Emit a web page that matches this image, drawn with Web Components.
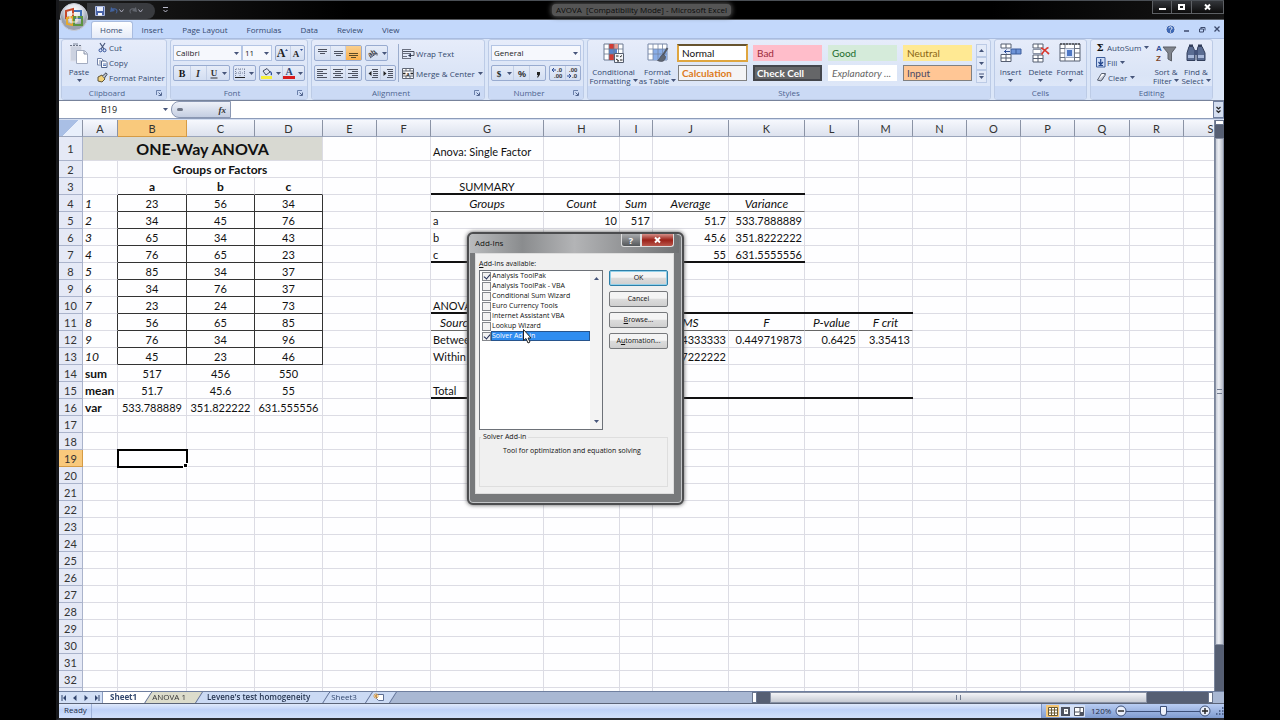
<!DOCTYPE html>
<html lang="en">
<head>
<meta charset="utf-8">
<title>AVOVA [Compatibility Mode] - Microsoft Excel</title>
<style>
   body {
      margin: 0;
      padding: 0 56px 0 56px;
      height: 100vh;
      box-sizing: border-box;
      background: #000;
      overflow: hidden;
      font-family: "Open Sans", sans-serif;
      font-size: 8px;
      line-height: 10px;
      color: #2b3f6b;
   }
</style>
</head>
<body>
<excel-window>
   <title-bar slot="title"></title-bar>
   <ribbon-tabs slot="tabs"></ribbon-tabs>
   <excel-ribbon slot="ribbon"></excel-ribbon>
   <formula-bar slot="formula"></formula-bar>
   <work-sheet slot="sheet"></work-sheet>
   <scroll-column slot="scroll"></scroll-column>
   <sheet-tabs slot="sheets"></sheet-tabs>
   <status-bar slot="status">Ready</status-bar>
</excel-window>
<addins-dialog></addins-dialog>

<script>
// Icon drawings: [width, height, svg content]
const ICONS = {
   arrow: [5, 3, `<path d="M0 0h5L2.5 3z" fill="#46557a"/>`],
   arrowup: [5, 3, `<path d="M0 3h5L2.5 0z" fill="#46557a"/>`],
   more: [7, 7, `<path d="M1 1h5" stroke="#46557a"/><path d="M1 3h5l-2.500 3z" fill="#46557a"/>`],
   launcher: [6, 6, `<path d="M.5 5V.5H5" fill="none" stroke="#6b80ab"/><path d="M2.500 2.500L5 5M5.500 2.500v3h-3" fill="none" stroke="#53668f"/>`],
   save: [10, 10, `<path d="M.5.5h9v9h-9z" fill="#4a64a8" stroke="#a9b7dd"/><path d="M2 1h6v4H2z" fill="#e9eefb"/><path d="M3 7h4v2.500H3z" fill="#fff"/>`],
   undo: [10, 10, `<path d="M2 1L1 6l5-1-1.500-1.200C7 3 8.500 5 6.500 8 10 6 9 1 3.600 2.400z" fill="#42639f"/>`],
   redo: [10, 10, `<path d="M8 1l1 5-5-1 1.500-1.200C3 3 1.500 5 3.500 8 0 6 1 1 6.400 2.400z" fill="#62666e"/>`],
   qarrow: [5, 4, `<path d="M.5.5L2.500 3 4.500.5" fill="none" stroke="#aab"/>`],
   qmore: [5, 6, `<path d="M0 .5h5M.5 3l2 2 2-2" fill="none" stroke="#bbc"/>`],
   office: [30, 30, `
      <defs><radialGradient id="g" cx=".5" cy=".3"><stop offset="0" stop-color="#fff"/><stop offset=".6" stop-color="#dfe2ea"/><stop offset="1" stop-color="#9aa0ad"/></radialGradient></defs>
      <circle cx="15" cy="15" r="13.500" fill="url(#g)" stroke="#c8ccd6"/>
      <path d="M7 9l7-2v8l-7 1z" fill="none" stroke="#c5482a" stroke-width="2"/>
      <path d="M15 9h7v7h-6" fill="none" stroke="#4372b8" stroke-width="2"/>
      <path d="M8 16l6-1v8l-6-1z" fill="none" stroke="#e6a92c" stroke-width="2"/>
      <path d="M15 15h8v8h-8z" fill="none" stroke="#5c9440" stroke-width="2"/>
      <path d="M11 12h7v8h-7z" fill="none" stroke="#f8f0d8"/>`],
   help: [11, 11, `<circle cx="5.500" cy="5.500" r="4.500" fill="#3e68b5" stroke="#dfe8fa"/><path d="M4 4.300c0-2 3-2 3 0 0 1.200-1.500 1-1.500 2.200M5.500 7.500v1" fill="none" stroke="#fff"/>`],
   min: [8, 8, `<path d="M1 6h5" stroke="#3c4a6c" stroke-width="1.500"/>`],
   restore: [8, 8, `<path d="M3 2.500h4v3M1.500 4h4v3h-4zM3 2v2" fill="none" stroke="#3c4a6c"/>`],
   close: [8, 8, `<path d="M1.500 1.500l5 5M6.500 1.500l-5 5" stroke="#3c4a6c" stroke-width="1.300"/>`],
   wmin: [9, 8, `<path d="M1 5h7v2H1z" fill="#fff"/>`],
   wmax: [9, 8, `<path d="M2 2h5v4H2z" fill="none" stroke="#fff" stroke-width="2"/>`],
   wclose: [9, 8, `<path d="M2 1.500l5 5M7 1.500l-5 5" stroke="#fff" stroke-width="2"/>`],
   paste: [20, 22, `<path d="M1.500 3h11v15h-11z" fill="#ccd2e0" stroke="#dfe2ec"/><path d="M1 2.500h12" stroke="#6d7688" stroke-dasharray="2 1"/><path d="M4 1h5" stroke="#7b8496"/><path d="M7.500 7.500h8l3 3v10h-11z" fill="#fff" stroke="#a3acc0"/><path d="M15 8v3h3" fill="#dfe4ef" stroke="#8b95ab"/>`],
   cut: [11, 11, `<path d="M3 1l4 6M8 1L4 7" stroke="#46557a" stroke-width="1.200"/><circle cx="3.500" cy="8.300" r="1.500" fill="none" stroke="#2f4f97"/><circle cx="7.500" cy="8.300" r="1.500" fill="none" stroke="#2f4f97"/>`],
   copy: [11, 11, `<path d="M.5 1.500h4l1.500 1.500v5H.5z" fill="#fff" stroke="#7383a8"/><path d="M2 4h2M2 6h2" stroke="#7383a8"/><path d="M4.500 4h4L10 5.500v5H4.500z" fill="#fff" stroke="#53668f"/><path d="M6 7h3M6 8.500h3" stroke="#5c7bb8"/>`],
   painter: [11, 11, `<path d="M1 5l4-2 3 4-3 3-4-1z" fill="#f2d27a" stroke="#5d5336"/><path d="M5.500 4L9 .8l1.200 1.400L7.500 6" fill="#b9bfca" stroke="#444c5c"/>`],
   bold: [10, 11, `<text x="5" y="9" font-family="Liberation Serif" font-size="10" font-weight="700" text-anchor="middle" fill="#151515">B</text>`],
   italic: [10, 11, `<text x="5" y="9" font-family="Liberation Serif" font-size="10" font-style="italic" font-weight="700" text-anchor="middle" fill="#333">I</text>`],
   underline: [10, 11, `<text x="5" y="8" font-family="Liberation Serif" font-size="9" font-weight="700" text-anchor="middle" fill="#333">U</text><path d="M1.500 10h7" stroke="#333"/>`],
   grow: [13, 12, `<text x="5" y="10" font-family="Liberation Serif" font-size="12" font-weight="700" text-anchor="middle" fill="#222">A</text><path d="M9 4l1.500-2L12 4z" fill="#2f4f97"/>`],
   shrink: [13, 12, `<text x="5" y="10" font-family="Liberation Serif" font-size="9" font-weight="700" text-anchor="middle" fill="#222">A</text><path d="M9 2l1.500 2L12 2z" fill="#2f4f97"/>`],
   borders: [11, 11, `<path d="M.5 1v8M5 1v8M9.500 1v8M1 1h9M1 5h9" stroke="#7c87a0" stroke-dasharray="1 1" fill="none"/><path d="M0 9.500h10" stroke="#222"/>`],
   fill: [12, 12, `<path d="M2 4l4-2.500L9 5 5 8z" fill="#dfe5f2" stroke="#414b63"/><path d="M9 4.500c2 1 1.500 3 1 3.500" fill="none" stroke="#2f4f97" stroke-width="1.300"/><path d="M0 9h11v3H0z" fill="#f6f03c"/>`],
   color: [12, 12, `<text x="6" y="8" font-family="Liberation Serif" font-size="10" font-weight="700" text-anchor="middle" fill="#2b3f6b">A</text><path d="M0 9h12v3H0z" fill="#d91c1c"/>`],
   top: [11, 11, `<path d="M1 1.500h9M1 3.500h9M3 5.500h5" stroke="#4d5260"/>`],
   middle: [11, 11, `<path d="M1 3.500h9M1 5.500h9M3 7.500h5" stroke="#4d5260"/>`],
   bottom: [11, 11, `<path d="M1 5.500h9M1 7.500h9M3 9.500h5" stroke="#5c4a26"/>`],
   left: [11, 11, `<path d="M0 1.500h10M0 3.500h6M0 5.500h10M0 7.500h6M0 9.500h10" stroke="#4d5260"/>`],
   center: [11, 11, `<path d="M0 1.500h10M2 3.500h6M0 5.500h10M2 7.500h6M0 9.500h10" stroke="#4d5260"/>`],
   right: [11, 11, `<path d="M0 1.500h10M4 3.500h6M0 5.500h10M4 7.500h6M0 9.500h10" stroke="#4d5260"/>`],
   orient: [12, 11, `<text x="1" y="8" font-size="7" font-weight="700" fill="#333" transform="rotate(-35 4 6)">ab</text><path d="M3 10l7-5M10 5L7.500 5.500M10 5v2.500" stroke="#4d5260" fill="none"/>`],
   outdent: [12, 11, `<path d="M5 1.500h6M6 3.500h5M6 5.500h5M6 7.500h5M5 9.500h6" stroke="#4d5260"/><path d="M4.500 3L1.500 5.500l3 2.500z" fill="#222"/>`],
   indent: [12, 11, `<path d="M5 1.500h6M6 3.500h5M6 5.500h5M6 7.500h5M5 9.500h6" stroke="#4d5260"/><path d="M1.500 3l3 2.500-3 2.500z" fill="#222"/>`],
   wrap: [13, 12, `<path d="M.5 1v10M1 1.500h8M1 5.500h8M1 8.500h4M1 10.500h8" stroke="#6a7080"/><path d="M1 3.500h11v4H8" fill="none" stroke="#4d5260"/><path d="M9 5.500L6 7.500l3 2z" fill="#2b3550"/>`],
   merge: [13, 12, `<path d="M.5.5h11v10H.5zM4 .5V3M8 .5V3M4 8v2.500M8 8v2.500M.5 3h11M.5 8h11" fill="#fff" stroke="#5e6675"/><text x="6" y="7.500" font-size="5" font-weight="700" text-anchor="middle" fill="#222">a</text><path d="M1 5.500h2.500M8.500 5.500H11" stroke="#222" stroke-width="1.400"/>`],
   dollar: [10, 11, `<text x="5" y="9" font-size="9" font-family="Liberation Serif" font-weight="700" text-anchor="middle" fill="#222">$</text>`],
   percent: [10, 11, `<text x="5" y="9" font-size="9" font-weight="600" text-anchor="middle" fill="#222">%</text>`],
   comma: [10, 11, `<path d="M4 4h3v2.500L5 9.500H4L5 7H4z" fill="#222"/>`],
   decinc: [13, 12, `<text x="6" y="5" font-size="6" font-weight="700" fill="#333">.0</text><text x="3" y="11" font-size="6" font-weight="700" fill="#333">.00</text><path d="M1 3h4M3 1L1 3l2 2" fill="none" stroke="#2f4f97"/>`],
   decdec: [13, 12, `<text x="3" y="5" font-size="6" font-weight="700" fill="#333">.00</text><text x="6" y="11" font-size="6" font-weight="700" fill="#333">.0</text><path d="M1 9h4M3 7l2 2-2 2" fill="none" stroke="#2f4f97"/>`],
   cond: [22, 20, `<path d="M1 1h19v16H1z" fill="#fff" stroke="#6b7890"/><path d="M6 1h5v5H6zM6 11h5v6H6z" fill="#d23c34"/><path d="M6 6h8v5H6z" fill="#5b84cc"/><path d="M11 1h4v5h-4z" fill="#e89b91"/><path d="M6 1v16M11 1v16M15.500 1v16M1 6h19M1 11h19" stroke="#6b7890" stroke-width=".8"/><path d="M11.500 10.500h9v9h-9z" fill="#f5f6f9" stroke="#555e70"/><path d="M13 13h2.500M17 14l2-1.500M13 16l2.500 1.500M17 17h2.500M14 18h2" stroke="#222"/>`],
   table: [22, 20, `<path d="M1 1h19v16H1z" fill="#fff" stroke="#7585a5"/><path d="M6 6h14v11H6z" fill="#8aaee8"/><path d="M6 1v16M11 1v16M15.500 1v16M1 6h19M1 11h19" stroke="#7585a5" stroke-width=".8"/><path d="M20.500 5L16 12" stroke="#555b66" stroke-width="2"/><path d="M16.500 11.500c-3 0-3 4-6 6 4 2 8 1 8-4z" fill="#5f6673" stroke="#3f4552" stroke-width=".6"/>`],
   insert: [22, 20, `<path d="M1 1h10v4H1zM6 1v4M1 11.500h10v7H1zM6 11.500v7M1 15h10" fill="#fff" stroke="#555e70"/><path d="M11 6h10v5H11z" fill="#6d93d6" stroke="#3f5f9c"/><path d="M16 6v5" stroke="#3f5f9c"/><path d="M10 8.500H4M6.500 6.500l-2 2 2 2" fill="none" stroke="#2f4f97"/>`],
   delete: [22, 20, `<path d="M3 1h10v4H3zM8 1v4M3 12h10v7H3zM8 12v7M3 15.500h10" fill="#fff" stroke="#555e70"/><path d="M3 6.500h8v4H3z" fill="#fff" stroke="#8a93a6"/><path d="M11 5c3 1 5 3 8 6M18.500 4.500c-3 1-5 4-7 7" fill="none" stroke="#d8392f" stroke-width="1.800"/>`],
   format: [22, 20, `<path d="M1 1h20v17H1z" fill="#fff" stroke="#555e70"/><path d="M1 5.500h20M1 10h20M1 14.500h20M6 1v17M15.500 1v17" stroke="#6b7382"/><path d="M6 5.500h9v9H6z" fill="#d8e4fa"/><path d="M8 7h5v6H8z" fill="#4f78c4"/><path d="M1 1h20" stroke="#222" stroke-dasharray="2 1"/>`],
   sum: [10, 11, `<text x="4" y="9" font-size="10" font-family="DejaVu Serif" font-weight="700" text-anchor="middle" fill="#111">Σ</text>`],
   filldown: [10, 11, `<path d="M.5.5h8.500v9.500H.5z" fill="#cddcf7" stroke="#3f5f9c"/><path d="M4.700 2v5M2.500 5l2.200 2.500L7 5M2.500 8.500H7" fill="none" stroke="#24468c" stroke-width="1.200"/>`],
   eraser: [11, 11, `<path d="M5.500 1.500h4L6 8H1.500z" fill="#fff" stroke="#555e70"/><path d="M1.500 8L5 9l4-5.500V2" fill="#c5cbd8" stroke="#555e70"/>`],
   sort: [22, 20, `<text x="1" y="8" font-family="Liberation Sans" font-size="8" font-weight="700" fill="#2f4f97">A</text><text x="1" y="18" font-family="Liberation Sans" font-size="8" font-weight="700" fill="#7a4428">Z</text><path d="M8 4h13l-4.500 6v8l-3.500-2v-6z" fill="#80848c" stroke="#5c6068"/>`],
   find: [22, 20, `<path d="M4 3.500h4l2 5v9H2V10zM13 3.500h4l3 6.500v7.500h-8v-9z" fill="#5a6c92" stroke="#333f5c"/><path d="M9 7h4v5H9z" fill="#44537a"/><path d="M4 1.500h4v2H4zM13 1.500h4v2h-4z" fill="#333f5c"/><path d="M3 12h6v3H3zM13 12h6v3h-6z" fill="#a8b8da"/>`],
   chevrons: [7, 8, `<path d="M1.500 1l2 2 2-2M1.500 4.500l2 2 2-2" fill="none" stroke="#222" stroke-width="1.200"/>`],
   newsheet: [13, 9, `<path d="M3.500 1.500h7v6h-5l-2-2z" fill="#fff" stroke="#5d6e94"/><path d="M3 0v6M0 3h6M1 1l4 4M5 1L1 5" stroke="#dd9a38" stroke-width=".8"/>`],
   first: [6, 6, `<path d="M1 0v6" stroke="#33466f"/><path d="M5 0v6L2 3z" fill="#33466f"/>`],
   prev: [6, 6, `<path d="M4.500 0v6L1 3z" fill="#33466f"/>`],
   next: [6, 6, `<path d="M1.500 0v6L5 3z" fill="#33466f"/>`],
   last: [6, 6, `<path d="M5 0v6" stroke="#33466f"/><path d="M1 0v6l3-3z" fill="#33466f"/>`],
   vnormal: [10, 9, `<path d="M.5.5h9v8h-9zM.5 3h9M.5 6h9M3.500.5v8M6.500.5v8" fill="#fff" stroke="#6a5a33"/>`],
   vlayout: [10, 9, `<path d="M0 0h9v9H0z" fill="#4d5260"/><path d="M3 2h4v5H3z" fill="#fff"/><path d="M4 4h2" stroke="#444"/>`],
   vbreak: [10, 9, `<path d="M.5.5h9v8h-9z" fill="#fff" stroke="#4d5260"/><path d="M6 1v4H1M6 6v3" fill="none" stroke="#4d5260"/><path d="M6 5h3v3H6z" fill="#4d5260"/>`],
   minus: [12, 12, `<circle cx="6" cy="6" r="5" fill="#e8eefb" stroke="#3d5079"/><path d="M3 6h6" stroke="#222" stroke-width="1.400"/>`],
   plus: [12, 12, `<circle cx="6" cy="6" r="5" fill="#e8eefb" stroke="#3d5079"/><path d="M3 6h6M6 3v6" stroke="#222" stroke-width="1.400"/>`],
   grip: [9, 9, `<path d="M7 1h1.500M7 4h1.500M4 4h1.500M7 7h1.500M4 7h1.500M1 7h1.500" stroke="#3d5079" stroke-width="1.500"/>`],
   pointer: [9, 15, `<path d="M.5.5v11l2.500-2 2 4.500 2-1-2-4h3z" fill="#fff" stroke="#222"/>`],
};

// Base class: puts styles and markup in an open shadow root
class BaseElement extends HTMLElement {
   constructor() {
      super();
      this.attachShadow({ mode: "open" });
   }

   connectedCallback() {
      this.shadowRoot.innerHTML = `<style>* { box-sizing: border-box; } ${this.css()}</style>${this.html()}`;
   }

   attr(name, fallback = "") {
      return this.getAttribute(name) || fallback;
   }
}

class UiIcon extends BaseElement {
   css() { return `:host { display: inline-flex; flex: none; } svg { display: block; }`; }
   html() {
      const [w, h, content] = ICONS[this.attr("name")];
      return `<svg width="${w}" height="${h}" viewBox="0 0 ${w} ${h}" aria-hidden="true">${content}</svg>`;
   }
}

class ExcelWindow extends BaseElement {
   css() {
      return `
      :host {
         display: flex;
         flex-direction: column;
         height: 100%;
         box-sizing: border-box;
         border-left: 3px solid #17181b;
         border-bottom: 2px solid #2b2d35;
      }
      .middle { display: flex; flex: 1; min-height: 0; padding-top: 1px; background: #d3def2; border-top: 1px solid #8d9cb9; }
      ::slotted(work-sheet) { flex: 1; min-width: 0; }`;
   }
   html() {
      return `
      <slot name="title"></slot>
      <slot name="tabs"></slot>
      <slot name="ribbon"></slot>
      <slot name="formula"></slot>
      <div class="middle"><slot name="sheet"></slot><slot name="scroll"></slot></div>
      <slot name="sheets"></slot>
      <slot name="status"></slot>`;
   }
}

class TitleBar extends BaseElement {
   css() {
      return `
      :host {
         display: grid;
         grid-template-columns: 1fr auto 1fr;
         height: 20px;
         box-sizing: border-box;
         position: relative;
         background: linear-gradient(90deg, #1d1d1d, #000 25%, #000 80%, #161616);
         border-top: 1px solid #4a4f55;
         border-bottom: 1px solid #54575c;
      }
      button { border: 0; padding: 0; background: none; display: flex; align-items: center; justify-content: center; }
      .office { position: absolute; left: 0; top: 1px; z-index: 2; }
      .quick {
         display: flex; align-items: center; gap: 4px;
         justify-self: start;
         height: 16px; margin: 1px 0 0 28px; padding: 0 12px 0 8px;
         background: #393b3f; border-radius: 0 8px 8px 0;
      }
      .left { display: flex; align-items: center; gap: 8px; }
      h1 {
         margin: 0; padding: 0 4px; align-self: center;
         font-size: 8px; font-weight: 400; color: #0c0c0c; white-space: pre;
         background: #555; box-shadow: 0 0 5px 1px #555; border-radius: 4px;
         line-height: 12px;
      }
      .win { justify-self: end; display: flex; height: 13px; }
      .win button { width: 20px; border: 1px solid #5d6064; border-top: 0; border-left-width: 0; background: linear-gradient(#33363a, #0c0c0c); }
      .win button:first-child { border-left-width: 1px; }
      .win button:last-child { width: 32px; }`;
   }
   html() {
      return `
      <button class="office" aria-label="Office Button"><ui-icon name="office"></ui-icon></button>
      <div class="left">
         <div class="quick">
            <button aria-label="Save"><ui-icon name="save"></ui-icon></button>
            <button aria-label="Undo"><ui-icon name="undo"></ui-icon><ui-icon name="qarrow"></ui-icon></button>
            <button aria-label="Redo"><ui-icon name="redo"></ui-icon><ui-icon name="qarrow"></ui-icon></button>
         </div>
         <button aria-label="Customize Quick Access Toolbar"><ui-icon name="qmore"></ui-icon></button>
      </div>
      <h1>AVOVA  [Compatibility Mode] - Microsoft Excel</h1>
      <div class="win">
         <button aria-label="Minimize"><ui-icon name="wmin"></ui-icon></button>
         <button aria-label="Maximize"><ui-icon name="wmax"></ui-icon></button>
         <button aria-label="Close"><ui-icon name="wclose"></ui-icon></button>
      </div>`;
   }
}

class RibbonTabs extends BaseElement {
   css() {
      return `
      :host { display: flex; justify-content: space-between; height: 18px; padding-left: 32px; background: #c3d8fb; }
      nav, .tools { display: flex; }
      nav button {
         margin-top: 1px; padding: 0 9px 0 8px; border: 1px solid transparent; border-bottom: 0; background: none;
         font: inherit; color: #34496f;
      }
      nav button[aria-selected=true] { background: linear-gradient(#fff, #e5ebf8); border-color: #a9bcdf; border-radius: 3px 3px 0 0; }
      .tools { align-items: center; gap: 7px; padding-right: 3px; }
      .tools button { border: 0; padding: 0; background: none; display: flex; }`;
   }
   html() {
      const tabs = ["Home", "Insert", "Page Layout", "Formulas", "Data", "Review", "View"];
      return `
      <nav role="tablist">${tabs.map((t, i) => `<button role="tab" aria-selected="${i == 0}">${t}</button>`).join("")}</nav>
      <div class="tools">
         <button aria-label="Help"><ui-icon name="help"></ui-icon></button>
         <button aria-label="Minimize workbook"><ui-icon name="min"></ui-icon></button>
         <button aria-label="Restore workbook"><ui-icon name="restore"></ui-icon></button>
         <button aria-label="Close workbook"><ui-icon name="close"></ui-icon></button>
      </div>`;
   }
}

// One titled block of the ribbon
class RibbonGroup extends BaseElement {
   css() {
      return `
      :host {
         display: flex; flex-direction: column;
         border: 1px solid #bccbe6; border-radius: 3px;
         background: linear-gradient(#e6ecfa, #dae4f6 60%, #e2ebfb);
         overflow: hidden;
      }
      .content { display: flex; height: 46px; }
      footer { display: flex; height: 13px; align-items: center; background: #cbdaf5; color: #4d648f; }
      .label { flex: 1; text-align: center; }
      footer button { border: 0; padding: 0 4px; background: none; display: flex; }`;
   }
   html() {
      const launcher = this.hasAttribute("launcher")
         ? `<button aria-label="${this.attr("label")} options"><ui-icon name="launcher"></ui-icon></button>` : "";
      return `<div class="content"><slot></slot></div>
      <footer><span class="label">${this.attr("label")}</span>${launcher}</footer>`;
   }
}

// Icon above a caption of one or two lines
class LargeButton extends BaseElement {
   css() {
      return `
      :host { display: block; }
      button {
         display: flex; flex-direction: column; align-items: center;
         width: 100%; border: 0; padding: 3px 0 0; background: none;
         font: inherit; line-height: 9px; color: #34496f; white-space: nowrap;
      }
      .pic { height: 24px; }
      .line { display: flex; align-items: center; justify-content: center; gap: 2px; min-height: 9px; }`;
   }
   html() {
      const [first, second = ""] = this.attr("label").split("|");
      return `<button><span class="pic"><ui-icon name="${this.attr("icon")}"></ui-icon></span>
      <span>${first}</span><span class="line">${second}<ui-icon name="arrow"></ui-icon></span></button>`;
   }
}

class SmallButton extends BaseElement {
   css() {
      return `
      :host { display: block; }
      button {
         display: flex; align-items: center; gap: 1px; height: 15px;
         border: 0; padding: 0; background: none; font: inherit; color: #34496f; white-space: nowrap;
      }
      .arrow { margin-left: 2px; }`;
   }
   html() {
      return `<button><ui-icon name="${this.attr("icon")}"></ui-icon><slot></slot>
      ${this.hasAttribute("arrow") ? `<ui-icon class="arrow" name="arrow"></ui-icon>` : ""}</button>`;
   }
}

// Bordered strip of icon buttons
class ToolSet extends BaseElement {
   css() {
      return `
      :host { display: flex; height: 16px; border: 1px solid #98abd0; border-radius: 2px; background: linear-gradient(#e6ecf8, #d3def2); }
      button {
         flex: 1; display: flex; align-items: center; justify-content: center; gap: 3px;
         border: 0; padding: 0; background: none;
      }
      button + button { border-left: 1px solid #c3cfe6; }
      button.on { background: linear-gradient(#f9cf8f, #fbb04c); }
      button.drop { flex: 1.4; }`;
   }
   html() {
      return this.attr("tools").split(" ").map((tool) => {
         const name = tool.replace(/[+*]/, "");
         const drop = tool.endsWith("+");
         const cls = drop ? "drop" : tool.endsWith("*") ? "on" : "";
         return `<button class="${cls}" aria-label="${name}"><ui-icon name="${name}"></ui-icon>${drop ? `<ui-icon name="arrow"></ui-icon>` : ""}</button>`;
      }).join("");
   }
}

class DropBox extends BaseElement {
   css() {
      return `
      :host { display: block; position: relative; }
      select {
         display: block; appearance: none; width: 100%; height: 16px; padding: 0 2px;
         border: 1px solid #b4c5e4; border-radius: 0; background: #f6f8fd; font: inherit; color: #222;
      }
      ui-icon { position: absolute; right: 3px; top: 7px; pointer-events: none; }`;
   }
   html() {
      return `<select aria-label="${this.attr("label")}"><option>${this.attr("value")}</option></select><ui-icon name="arrow"></ui-icon>`;
   }
}

class StyleGallery extends BaseElement {
   css() {
      return `
      :host { display: flex; gap: 3px; }
      .swatches { flex: 1; display: grid; grid-template-columns: repeat(4, 1fr); grid-auto-rows: 18px; gap: 2px 4px; }
      .swatches button {
         text-align: left; padding: 0 3px; margin: 1px; border: 1px solid transparent;
         font: 10px/12px Lato, sans-serif; white-space: nowrap; overflow: hidden;
      }
      .scroll { display: flex; flex-direction: column; width: 11px; }
      .scroll button {
         flex: 1; display: flex; align-items: center; justify-content: center;
         padding: 0; border: 1px solid #bccbe6; background: #e3eaf8;
      }
      .swatches .normal { background: #fff; color: #111; margin: 0; border: 2px solid #dfa640; border-top-color: #67542f; }
      .bad { background: #ffbdca; color: #9c2a3a; }
      .good { background: #d5ebda; color: #1c6b2c; }
      .neutral { background: #ffe993; color: #8a6512; }
      .swatches .calc { background: #f4f4f6; color: #dd7a20; border-color: #808080; font-weight: 700; }
      .swatches .check { background: #656668; color: #fff; border: 2px solid #44464c; padding: 0 2px; font-weight: 700; }
      .swatches .expl { background: #fff; color: #666; font-style: italic; }
      .swatches .input { background: #ffc695; color: #4b4663; border-color: #808080; }`;
   }
   html() {
      const styles = [
         ["normal", "Normal"], ["bad", "Bad"], ["good", "Good"], ["neutral", "Neutral"],
         ["calc", "Calculation"], ["check", "Check Cell"], ["expl", "Explanatory ..."], ["input", "Input"],
      ];
      return `<div class="swatches">${styles.map(([c, t]) => `<button class="${c}">${t}</button>`).join("")}</div>
      <div class="scroll">
         <button aria-label="Up"><ui-icon name="arrowup"></ui-icon></button>
         <button aria-label="Down"><ui-icon name="arrow"></ui-icon></button>
         <button aria-label="More"><ui-icon name="more"></ui-icon></button>
      </div>`;
   }
}

class ExcelRibbon extends BaseElement {
   css() {
      return `
      :host {
         display: flex; gap: 3px; height: 63px; padding: 0 11px 0 2px; box-sizing: border-box;
         background: #dbe6f8; border-top: 1px solid #a9bcdf; border-bottom: 1px solid #77839b;
      }
      ribbon-group { flex: 0 0 auto; }
      .clipboard { width: 106px; }
      .font { width: 138px; }
      .align { width: 174px; }
      .number { width: 96px; }
      .styles { flex: 1; }
      .cells { width: 93px; }
      .editing { width: 123px; }
      .rows { display: flex; flex-direction: column; justify-content: center; padding: 0 0 1px 1px; }
      .two { flex: 1; display: flex; flex-direction: column; gap: 4px; padding: 5px 2px 0 2px; }
      .row { display: flex; gap: 3px; }
      .row drop-box + drop-box { margin-left: -3px; }
      .wide { flex: 1; }
      .split { border-left: 1px solid #9badcd; margin: 4px 0; padding: 2px 0 0 3px; display: flex; flex-direction: column; gap: 5px; }
      style-gallery { flex: 1; padding: 4px 3px 0 1px; height: 43px; }`;
   }
   html() {
      return `
      <ribbon-group class="clipboard" label="Clipboard" launcher>
         <large-button icon="paste" label="Paste" style="width: 34px"></large-button>
         <div class="rows">
            <small-button icon="cut">Cut</small-button>
            <small-button icon="copy">Copy</small-button>
            <small-button icon="painter">Format Painter</small-button>
         </div>
      </ribbon-group>
      <ribbon-group class="font" label="Font" launcher>
         <div class="two">
            <div class="row">
               <drop-box label="Font" value="Calibri" style="width: 69px"></drop-box>
               <drop-box label="Font size" value="11" style="width: 30px"></drop-box>
               <tool-set class="wide" tools="grow shrink"></tool-set>
            </div>
            <div class="row">
               <tool-set tools="bold italic underline+" style="width: 57px"></tool-set>
               <tool-set tools="borders+" style="width: 23px"></tool-set>
               <tool-set class="wide" tools="fill+ color+"></tool-set>
            </div>
         </div>
      </ribbon-group>
      <ribbon-group class="align" label="Alignment" launcher>
         <div class="two" style="flex: none">
            <div class="row">
               <tool-set tools="top middle bottom*" style="width: 48px"></tool-set>
               <tool-set tools="orient+" style="width: 23px"></tool-set>
            </div>
            <div class="row">
               <tool-set tools="left center right" style="width: 48px"></tool-set>
               <tool-set tools="outdent indent" style="width: 31px"></tool-set>
            </div>
         </div>
         <div class="split">
            <small-button icon="wrap">Wrap Text</small-button>
            <small-button icon="merge" arrow>Merge &amp; Center</small-button>
         </div>
      </ribbon-group>
      <ribbon-group class="number" label="Number" launcher>
         <div class="two">
            <drop-box label="Number format" value="General"></drop-box>
            <div class="row">
               <tool-set class="wide" tools="dollar+ percent comma"></tool-set>
               <tool-set tools="decinc decdec" style="width: 32px"></tool-set>
            </div>
         </div>
      </ribbon-group>
      <ribbon-group class="styles" label="Styles">
         <large-button icon="cond" label="Conditional|Formatting" style="width: 51px"></large-button>
         <large-button icon="table" label="Format|as Table" style="width: 37px"></large-button>
         <style-gallery></style-gallery>
      </ribbon-group>
      <ribbon-group class="cells" label="Cells">
         <large-button icon="insert" label="Insert" style="width: 31px"></large-button>
         <large-button icon="delete" label="Delete" style="width: 29px"></large-button>
         <large-button icon="format" label="Format" style="width: 30px"></large-button>
      </ribbon-group>
      <ribbon-group class="editing" label="Editing">
         <div class="rows" style="width: 60px; padding-left: 5px">
            <small-button icon="sum" arrow>AutoSum</small-button>
            <small-button icon="filldown" arrow>Fill</small-button>
            <small-button icon="eraser" arrow>Clear</small-button>
         </div>
         <large-button icon="sort" label="Sort &amp;|Filter" style="width: 30px"></large-button>
         <large-button icon="find" label="Find &amp;|Select" style="width: 30px"></large-button>
      </ribbon-group>`;
   }
}

class FormulaBar extends BaseElement {
   css() {
      return `
      :host { display: flex; height: 17px; background: #fff; }
      input { min-width: 0; border: 0; padding: 0; background: #fff; font: inherit; color: #222; outline: none; }
      .name { width: 100px; text-align: center; font-size: 9px; }
      button { display: flex; align-items: center; justify-content: center; border: 0; padding: 0; background: none; }
      .drop { width: 12px; }
      .fx {
         display: flex; justify-content: space-between; align-items: center; width: 60px; padding: 0 4px 0 5px;
         background: linear-gradient(#eef1f8, #c4cee2); border: 1px solid #8a97b2; border-radius: 8px 0 0 8px;
         font: italic 700 9px "Liberation Serif", serif; color: #333;
      }
      .knob { width: 6px; height: 3px; border-radius: 3px; background: #6f7787; }
      .fx button { font: inherit; color: inherit; }
      .text { flex: 1; }
      .more { width: 11px; border: 1px solid #6f7f9f; background: #d4def0; }`;
   }
   html() {
      return `
      <input class="name" aria-label="Name Box" value="B19">
      <button class="drop" aria-label="Names"><ui-icon name="arrow"></ui-icon></button>
      <div class="fx"><span class="knob"></span><button aria-label="Insert Function">fx</button></div>
      <input class="text" aria-label="Formula">
      <button class="more" aria-label="Expand Formula Bar"><ui-icon name="chevrons"></ui-icon></button>`;
   }
}

// Column name -> width
const COLUMNS = {
   A: 35, B: 69, C: 68, D: 68, E: 54, F: 54, G: 113, H: 76, I: 33, J: 76, K: 76,
   L: 54, M: 54, N: 54, O: 54, P: 54, Q: 55, R: 54, S: 54,
};
const ROW_COUNT = 32;

const GROUPS = [
   [23, 56, 34], [34, 45, 76], [65, 34, 43], [76, 65, 23], [85, 34, 37],
   [34, 76, 37], [23, 24, 73], [56, 65, 85], [76, 34, 96], [45, 23, 46],
];

// Address -> [text, class names, columns spanned]
const CELLS = {
   A1: ["ONE-Way ANOVA", "c title", 4],
   B2: ["Groups or Factors", "c b", 3],
   B3: ["a", "c b"], C3: ["b", "c b"], D3: ["c", "c b"],
   A14: ["sum", "b"], B14: ["517", "c"], C14: ["456", "c"], D14: ["550", "c"],
   A15: ["mean", "b"], B15: ["51.7", "c"], C15: ["45.6", "c"], D15: ["55", "c"],
   A16: ["var", "b"], B16: ["533.788889", "c"], C16: ["351.822222", "c"], D16: ["631.555556", "c"],
   G1: ["Anova: Single Factor", "low"],
   G3: ["SUMMARY", "c"],
   G4: ["Groups", "c i"], H4: ["Count", "c i"], I4: ["Sum", "c i"], J4: ["Average", "c i"], K4: ["Variance", "c i"],
   G5: ["a", ""], H5: ["10", "r"], I5: ["517", "r"], J5: ["51.7", "r"], K5: ["533.7888889", "r"],
   G6: ["b", ""], J6: ["45.6", "r"], K6: ["351.8222222", "r"],
   G7: ["c", ""], J7: ["55", "r"], K7: ["631.5555556", "r"],
   G10: ["ANOVA", ""],
   G11: ["Source of Variation", "c i"], J11: ["MS", "c i"], K11: ["F", "c i"], L11: ["P-value", "c i"], M11: ["F crit", "c i"],
   G12: ["Between Groups", ""], J12: ["227.4333333", "r"], K12: ["0.449719873", "r"], L12: ["0.6425", "r"], M12: ["3.35413", "r"],
   G13: ["Within Groups", ""], J13: ["505.7222222", "r"],
   G15: ["Total", ""],
};

GROUPS.forEach((row, i) => {
   CELLS["A" + (i + 4)] = [i + 1, "i"];
   row.forEach((value, j) => CELLS["BCD"[j] + (i + 4)] = [value, "c"]);
});

// Ruled lines under cells: row, first column, last column, class name
const RULES = [
   [3, "B", "D", "thin"], [3, "G", "K", "thick"], [4, "G", "K", "grey"], [7, "G", "K", "thick"],
   [10, "G", "M", "thick"], [11, "G", "M", "grey"], [15, "G", "M", "thick"],
];

function cellClass(col, row) {
   let cls = (CELLS[col + row] || ["", ""])[1];
   RULES.forEach(([r, from, to, name]) => {
      if (r == row && col >= from && col <= to) cls += " " + name;
   });
   if (row >= 4 && row <= 13) {
      if (col >= "B" && col <= "D") cls += " thin";
      if (col >= "A" && col <= "D") cls += " side";
   }
   if (col + row == "B19") cls += " active";
   return cls;
}

class WorkSheet extends BaseElement {
   css() {
      return `
      :host { display: block; overflow: hidden; background: #fefeff; font: 11px/13px Lato, sans-serif; color: #111; }
      table { width: 0; table-layout: fixed; border-collapse: separate; border-spacing: 0; }
      th, td {
         height: 17px; padding: 0 2px; white-space: nowrap;
         border-right: 1px solid #dcdce4; border-bottom: 1px solid #dcdce4; text-align: left;
      }
      th { font-weight: 400; text-align: center; padding: 0; color: #333; }
      thead th { background: linear-gradient(#f6f8fd, #dde2ee); border-color: #9ba5bb; border-right-color: #8b93a5; }
      tbody th { background: #e5e9f6; border-color: #aab3cb; }
      thead th.corner { background: linear-gradient(135deg, #a9bfe5 50%, #e8effb 50%); }
      thead th.on, tbody th.on { background: #f9c97c; border-color: #d59b45; }
      tr.first th, tr.first td { height: 24px; }
      .c { text-align: center; }
      .r { text-align: right; }
      .b { font-size: 12px; font-weight: 700; }
      .i { font-size: 12px; font-style: italic; }
      .low { vertical-align: bottom; padding-bottom: 2px; }
      .title { background: #d8d9d2; font-size: 16px; line-height: 20px; font-weight: 700; }
      .thin { border-bottom-color: #333; }
      .side { border-right-color: #333; }
      .grey { border-bottom-color: #666; }
      .thick { position: relative; border-bottom-color: #111; }
      .thick::after { content: ""; position: absolute; left: 0; right: -1px; bottom: -1px; height: 2px; background: #111; }
      .active { position: relative; outline: 2px solid #000; outline-offset: -1px; }
      .active::after { content: ""; position: absolute; right: -2px; bottom: -2px; width: 3px; height: 3px; background: #000; border: 1px solid #fff; }`;
   }

   row(row) {
      let html = `<tr class="${row == 1 ? "first" : ""}"><th scope="row" class="${row == 19 ? "on" : ""}">${row}</th>`;
      let skip = 0;
      for (const col in COLUMNS) {
         // Skip cells covered by a merged one
         if (skip > 0) {
            skip--;
            continue;
         }
         const [text, , span = 1] = CELLS[col + row] || [""];
         skip = span - 1;
         html += `<td colspan="${span}" class="${cellClass(col, row)}">${text}</td>`;
      }
      return html + "</tr>";
   }

   html() {
      const names = Object.keys(COLUMNS);
      const rows = Array.from({ length: ROW_COUNT }, (_, i) => this.row(i + 1));
      return `<table>
         <colgroup><col style="width: 24px">${names.map((n) => `<col style="width: ${COLUMNS[n]}px">`).join("")}</colgroup>
         <thead><tr><th class="corner"></th>${names.map((n) => `<th scope="col" class="${n == "B" ? "on" : ""}">${n}</th>`).join("")}</tr></thead>
         <tbody>${rows.join("")}<tr><th></th>${names.map(() => "<td></td>").join("")}</tr></tbody>
      </table>`;
   }
}

class ScrollColumn extends BaseElement {
   css() {
      return `
      :host { display: flex; flex-direction: column; width: 10px; background: #565f73; box-sizing: border-box; border-left: 1px solid #7b869c; }
      .split { height: 5px; background: #fff; border: 1px solid #68748c; }
      .thumb {
         margin: 13px 0 46px; flex: 1; display: flex; align-items: center; justify-content: center;
         background: linear-gradient(90deg, #c9ced9, #eceef3 40%, #b4bac7); border: 1px solid #8790a3;
      }
      .thumb i { width: 5px; height: 5px; border: solid #707a8f; border-width: 1px 0; }`;
   }
   html() { return `<div class="split"></div><div class="thumb"><i></i></div>`; }
}

class SheetTabs extends BaseElement {
   css() {
      return `
      :host { display: flex; height: 12px; background: #a9b8d3; border-top: 1px solid #6f7f9f; box-sizing: border-box; }
      button { border: 0; padding: 0; background: none; font: inherit; color: #34496f; }
      .nav { display: flex; width: 44px; justify-content: space-around; align-items: center; background: #d3e0f6; border-right: 1px solid #8a9cbf; }
      .nav button { display: flex; }
      .tabs { display: flex; flex: 1; }
      .tabs button { margin-right: -6px; filter: drop-shadow(1px 0 0 #5d6e94); }
      .tabs span {
         display: block; height: 11px; line-height: 10px; white-space: nowrap;
         background: #cbdaf4; clip-path: polygon(0 0, 100% 0, calc(100% - 7px) 100%, 0 100%);
      }
      .tabs .on { background: #fff; font-weight: 700; padding: 0 14px 0 7px; }
      .tabs .tan { background: #dcdccb; color: #333; font-weight: 500; padding: 0 16px 0 7px; }
      .tabs .bold { font-weight: 600; color: #25344f; padding: 0 19px 0 11px; }
      .tabs .plain { padding: 0 15px 0 8px; }
      .tabs .new { padding: 1px 10px 0 7px; }
      .scroll { display: flex; flex: 0 0 472px; background: #565f73; }
      .handle { width: 5px; background: #fff; border: 1px solid #68748c; }
      .thumb {
         flex: 1; display: flex; align-items: center; justify-content: center;
         margin: 0 61px 0 13px; background: linear-gradient(#f3f4f7, #c6cad3); border: 1px solid #8790a3;
      }
      .thumb i { width: 5px; height: 5px; border: solid #707a8f; border-width: 0 1px; }
      .corner { width: 11px; background: #a9b8d3; }`;
   }
   html() {
      const nav = ["first", "prev", "next", "last"];
      const tabs = [
         ["on", "Sheet1"], ["tan", "ANOVA 1"], ["bold", "Levene's test homogeneity"], ["plain", "Sheet3"],
         ["new", `<ui-icon name="newsheet"></ui-icon>`],
      ];
      return `
      <div class="nav">${nav.map((n) => `<button aria-label="${n} sheet"><ui-icon name="${n}"></ui-icon></button>`).join("")}</div>
      <div class="tabs">${tabs.map(([c, t], i) => `<button style="z-index: ${9 - i}"><span class="${c}">${t}</span></button>`).join("")}</div>
      <div class="scroll"><div class="handle"></div><div class="thumb"><i></i></div><div class="handle"></div><div class="corner"></div></div>`;
   }
}

class StatusBar extends BaseElement {
   css() {
      return `
      :host {
         display: flex; height: 15px; box-sizing: border-box; border-top: 1px solid #5b6478;
         background: linear-gradient(#dfe9fb, #bfd2f8 40%, #d2e0fb); align-items: stretch; color: #222c44;
      }
      .mode { width: 33px; padding: 1px 0 0 5px; border-right: 1px solid #9fb2da; }
      .right {
         margin-left: auto; display: flex; align-items: center; width: 183px; padding-left: 4px;
         background: linear-gradient(#b9cdf3, #7f9bd0); border-left: 1px solid #7d92bd;
      }
      button { border: 0; padding: 0; background: none; display: flex; align-items: center; justify-content: center; }
      .view { width: 13px; height: 12px; background: #d5e0f5; }
      .view.on { background: #f6c878; }
      .zoom { margin: 0 4px 0 6px; }
      input { appearance: none; width: 74px; height: 11px; margin: 0 -1px; background: linear-gradient(#3d5079, #3d5079) center / 100% 1px no-repeat; }
      input::-webkit-slider-thumb {
         appearance: none; width: 7px; height: 10px; background: #eef2fb; border: 1px solid #3d5079; border-radius: 1px 1px 4px 4px;
      }
      .grip { margin-left: auto; }`;
   }
   html() {
      return `
      <div class="mode"><slot></slot></div>
      <div class="right">
         <button class="view on" aria-label="Normal"><ui-icon name="vnormal"></ui-icon></button>
         <button class="view" aria-label="Page Layout"><ui-icon name="vlayout"></ui-icon></button>
         <button class="view" aria-label="Page Break Preview"><ui-icon name="vbreak"></ui-icon></button>
         <label class="zoom" for="zoom">120%</label>
         <button aria-label="Zoom Out"><ui-icon name="minus"></ui-icon></button>
         <input id="zoom" type="range" min="0" max="100" value="50">
         <button aria-label="Zoom In"><ui-icon name="plus"></ui-icon></button>
         <ui-icon class="grip" name="grip"></ui-icon>
      </div>`;
   }
}

class AddinsDialog extends BaseElement {
   css() {
      return `
      :host {
         position: absolute; left: 467px; top: 232px; width: 217px;
         box-sizing: border-box; border: 2px solid #4c4d4f; border-radius: 6px;
         background: #77797b; padding: 0 8px 9px 6px;
         box-shadow: inset 0 0 0 1px #c4c6c8, 0 0 4px #555;
         font-size: 7px; line-height: 10px; color: #111;
      }
      header {
         display: flex; justify-content: space-between; height: 19px; margin: 0 -5px 0 -5px; padding: 0 5px;
         background: linear-gradient(90deg, #b9bbbd, #8a8c8e 25%, #b3b4b6 50%, #6f7173);
         border-radius: 4px 4px 0 0;
      }
      h2 { margin: 0; padding-top: 4px; font-size: 8px; font-weight: 400; }
      .win { display: flex; height: 13px; }
      .win button {
         width: 20px; padding: 0; display: flex; align-items: center; justify-content: center;
         border: 1px solid #ddd; border-top: 0; background: linear-gradient(#a9abad, #55585b);
         color: #fff; font: 700 9px "Open Sans", sans-serif; border-radius: 0 0 0 3px;
      }
      .win .x { width: 33px; background: linear-gradient(#d58f88, #9b2118 50%, #b9574c); border-radius: 0 0 3px 0; }
      .body { border: 1px solid #ddd; background: #f0f0f0; padding: 5px 5px 5px 3px; height: 241px; }
      .cols { display: flex; justify-content: space-between; margin-top: 1px; }
      .list {
         display: flex; width: 124px; height: 160px; border: 1px solid #6d7178; background: #fff; cursor: default;
      }
      ul { flex: 1; margin: 0; padding: 0; list-style: none; }
      li { height: 10px; }
      label { display: flex; align-items: center; height: 10px; padding-left: 2px; }
      label span { flex: 1; padding-left: 1px; line-height: 10px; }
      input {
         appearance: none; width: 9px; height: 9px; margin: 0; border: 1px solid #84878c; background: #f3f3f3;
         display: flex; align-items: center; justify-content: center;
      }
      input:checked::after { content: ""; width: 5px; height: 3px; border: solid #222e55; border-width: 0 0 1px 1px; transform: rotate(-50deg); }
      .on span { background: #2f8df0; color: #fff; outline: 1px solid #27548c; outline-offset: -1px; }
      .bar { width: 12px; background: #f3f3f3; display: flex; flex-direction: column; justify-content: space-between; align-items: center; padding: 6px 0; }
      .buttons { display: flex; flex-direction: column; gap: 5px; }
      .buttons button {
         width: 59px; height: 16px; padding: 0; font: inherit; color: #111;
         border: 1px solid #77797c; border-radius: 2px; background: linear-gradient(#f4f4f4 45%, #dcdcdc 50%, #cfcfcf);
      }
      .buttons .ok { border-color: #2d7fa8; box-shadow: inset 0 0 0 1px #92d0ea; }
      fieldset { margin: 2px 0 0; padding: 4px 0 0 23px; border: 1px solid #dedede; height: 55px; }
      legend { padding: 0 2px; margin-left: -22px; }
      .cursor { position: absolute; left: 54px; top: 95px; }`;
   }
   html() {
      const addins = [
         ["Analysis ToolPak", true], ["Analysis ToolPak - VBA"], ["Conditional Sum Wizard"], ["Euro Currency Tools"],
         ["Internet Assistant VBA"], ["Lookup Wizard"], ["Solver Add-in", true],
      ];
      const items = addins.map(([name, checked], i) => `
         <li><label class="${i == 6 ? "on" : ""}"><input type="checkbox" ${checked ? "checked" : ""}><span>${name}</span></label></li>`);
      return `
      <header>
         <h2>Add-Ins</h2>
         <div class="win"><button aria-label="Help">?</button><button class="x" aria-label="Close"><ui-icon name="wclose"></ui-icon></button></div>
      </header>
      <div class="body">
         <div><u>A</u>dd-Ins available:</div>
         <div class="cols">
            <div class="list"><ul>${items.join("")}</ul>
               <div class="bar"><ui-icon name="arrowup"></ui-icon><ui-icon name="arrow"></ui-icon></div>
            </div>
            <div class="buttons">
               <button class="ok">OK</button>
               <button>Cancel</button>
               <button><u>B</u>rowse...</button>
               <button>A<u>u</u>tomation...</button>
            </div>
         </div>
         <fieldset><legend>Solver Add-in</legend>Tool for optimization and equation solving</fieldset>
      </div>
      <ui-icon class="cursor" name="pointer"></ui-icon>`;
   }
}

customElements.define("ui-icon", UiIcon);
customElements.define("excel-window", ExcelWindow);
customElements.define("title-bar", TitleBar);
customElements.define("ribbon-tabs", RibbonTabs);
customElements.define("ribbon-group", RibbonGroup);
customElements.define("large-button", LargeButton);
customElements.define("small-button", SmallButton);
customElements.define("tool-set", ToolSet);
customElements.define("drop-box", DropBox);
customElements.define("style-gallery", StyleGallery);
customElements.define("excel-ribbon", ExcelRibbon);
customElements.define("formula-bar", FormulaBar);
customElements.define("work-sheet", WorkSheet);
customElements.define("scroll-column", ScrollColumn);
customElements.define("sheet-tabs", SheetTabs);
customElements.define("status-bar", StatusBar);
customElements.define("addins-dialog", AddinsDialog);
</script>
</body>
</html>
